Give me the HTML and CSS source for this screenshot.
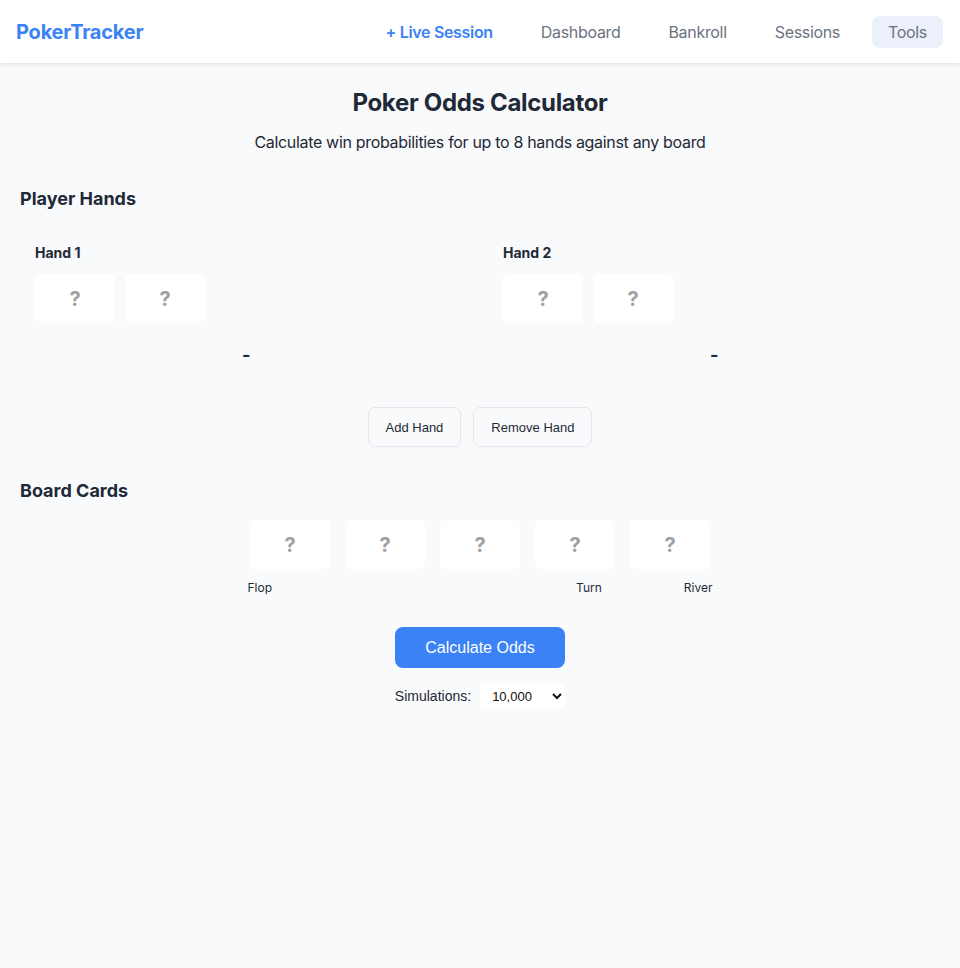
FILE: index.html
```html
<!DOCTYPE html>
<html lang="en">
<head>
<meta charset="utf-8">
<title>Poker Odds Calculator</title>
<link rel="stylesheet" href="styles.css">
</head>
<body>
<nav class="nav">
  <div class="logo">PokerTracker</div>
  <div class="links">
    <a class="link live">+ Live Session</a>
    <a class="link">Dashboard</a>
    <a class="link">Bankroll</a>
    <a class="link">Sessions</a>
    <a class="link active">Tools</a>
  </div>
</nav>
<main class="main">
  <h1 class="title">Poker Odds Calculator</h1>
  <p class="subtitle">Calculate win probabilities for up to 8 hands against any board</p>

  <h2 class="section">Player Hands</h2>
  <div class="hands">
    <div class="hand">
      <div class="hand-label">Hand 1</div>
      <div class="cards">
        <div class="card">?</div>
        <div class="card">?</div>
      </div>
      <div class="equity">-</div>
    </div>
    <div class="hand">
      <div class="hand-label">Hand 2</div>
      <div class="cards">
        <div class="card">?</div>
        <div class="card">?</div>
      </div>
      <div class="equity">-</div>
    </div>
  </div>
  <div class="hand-actions">
    <button class="btn">Add Hand</button>
    <button class="btn">Remove Hand</button>
  </div>

  <h2 class="section board-title">Board Cards</h2>
  <div class="board">
    <div class="board-cards">
      <div class="card">?</div>
      <div class="card">?</div>
      <div class="card">?</div>
      <div class="card">?</div>
      <div class="card">?</div>
    </div>
    <div class="board-labels">
      <span class="lbl">Flop</span>
      <span class="lbl turn">Turn</span>
      <span class="lbl">River</span>
    </div>
  </div>

  <div class="calc">
    <button class="calc-btn">Calculate Odds</button>
    <div class="sims">
      <label class="sims-label">Simulations:</label>
      <select class="sims-select">
        <option>10,000</option>
      </select>
    </div>
  </div>
</main>
</body>
</html>
```

FILE: styles.css
```css
* { box-sizing: border-box; }
html, body { margin: 0; }
body {
  background: #f9fafb;
  color: #1f2937;
  font-family: Inter, "Noto Sans", sans-serif;
  letter-spacing: -0.02em;
  min-height: 968px;
}
.nav {
  height: 63px;
  background: #fff;
  display: flex;
  align-items: center;
  justify-content: space-between;
  padding: 0 17px 0 16px;
  box-shadow: 0 1px 4px rgba(0,0,0,0.12);
  position: relative;
}
.logo {
  color: #3b82f6;
  font-weight: 700;
  font-size: 20px;
  letter-spacing: -0.2px;
}
.links { display: flex; gap: 16px; align-items: center; }
.link {
  font-size: 16px;
  color: #6b7280;
  padding: 4px 16px;
  line-height: 24px;
  border-radius: 8px;
}
.link.live { color: #3b82f6; font-weight: 600; }
.link.active { background: #ebf0fb; }
.main { padding: 24px 20px; }
.title {
  margin: 0;
  text-align: center;
  font-size: 24px;
  line-height: 32px;
  font-weight: 700;
}
.subtitle {
  margin: 11px 0 0;
  text-align: center;
  font-size: 16px;
  line-height: 24px;
}
.section {
  margin: 31px 0 0;
  font-size: 18px;
  line-height: 28px;
  font-weight: 700;
  letter-spacing: 0;
}
.hands {
  display: grid;
  grid-template-columns: 1fr 1fr;
  gap: 16px;
  margin-top: 15px;
}
.hand { padding: 15px; }
.hand-label {
  font-size: 14px;
  line-height: 20px;
  font-weight: 700;
  letter-spacing: 0;
  margin-bottom: 11px;
}
.cards { display: flex; gap: 10px; }
.card {
  width: 80px;
  height: 49px;
  background: #fff;
  border-radius: 6px;
  display: flex;
  align-items: center;
  justify-content: center;
  color: #a0a0a3;
  font-weight: 700;
  font-size: 20px;
}
.equity {
  text-align: center;
  font-weight: 700;
  font-size: 18px;
  line-height: 28px;
  margin-top: 18px;
}
.hand-actions {
  display: flex;
  justify-content: center;
  gap: 12px;
  margin-top: 23px;
}
.btn {
  font-family: "Liberation Sans", Arial, sans-serif;
  letter-spacing: 0;
  font-size: 13px;
  color: #1f2937;
  background: #f9fafb;
  border: 1px solid #e5e7eb;
  border-radius: 7px;
  height: 40px;
  padding: 0 17px;
}
.board-title { margin-top: 30px; }
.board {
  display: flex;
  flex-direction: column;
  align-items: center;
  margin-top: 15px;
}
.board-cards { display: flex; gap: 15px; }
.board-labels {
  display: flex;
  width: 465px;
  margin-top: 11px;
  font-size: 12px;
  line-height: 16px;
  letter-spacing: 0;
}
.lbl { color: #1f2937; }
.turn { margin-left: auto; margin-right: 82px; }
.calc {
  display: flex;
  flex-direction: column;
  align-items: center;
  margin-top: 31px;
}
.calc-btn {
  font-family: "Liberation Sans", Arial, sans-serif;
  letter-spacing: 0;
  font-size: 16px;
  color: #fff;
  background: #3b82f6;
  border: none;
  border-radius: 8px;
  width: 170px;
  height: 41px;
}
.sims {
  display: flex;
  align-items: center;
  gap: 9px;
  margin-top: 15px;
}
.sims-label {
  font-family: "Liberation Sans", Arial, sans-serif;
  letter-spacing: 0;
  font-size: 14px;
}
.sims-select {
  font-family: "Liberation Sans", Arial, sans-serif;
  letter-spacing: 0;
  font-size: 13px;
  background: #fff;
  border: none;
  border-radius: 4px;
  width: 85px;
  height: 26px;
  padding: 0 8px;
  color: #111;
}
```
